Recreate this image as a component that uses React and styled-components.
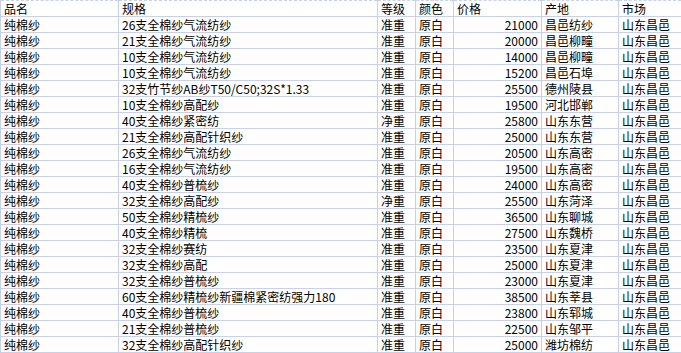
import React from "react"
import styled, { createGlobalStyle } from "styled-components"

const rows = [
    ["纯棉纱", "26支全棉纱气流纺纱", "准重", "原白", "21000", "昌邑纺纱", "山东昌邑"],
    ["纯棉纱", "21支全棉纱气流纺纱", "准重", "原白", "20000", "昌邑柳疃", "山东昌邑"],
    ["纯棉纱", "10支全棉纱气流纺纱", "准重", "原白", "14000", "昌邑柳疃", "山东昌邑"],
    ["纯棉纱", "10支全棉纱气流纺纱", "准重", "原白", "15200", "昌邑石埠", "山东昌邑"],
    ["纯棉纱", "32支竹节纱AB纱T50/C50;32S*1.33", "准重", "原白", "25500", "德州陵县", "山东昌邑"],
    ["纯棉纱", "10支全棉纱高配纱", "准重", "原白", "19500", "河北邯郸", "山东昌邑"],
    ["纯棉纱", "40支全棉纱紧密纺", "净重", "原白", "25800", "山东东营", "山东昌邑"],
    ["纯棉纱", "21支全棉纱高配针织纱", "准重", "原白", "25000", "山东东营", "山东昌邑"],
    ["纯棉纱", "26支全棉纱气流纺纱", "准重", "原白", "20500", "山东高密", "山东昌邑"],
    ["纯棉纱", "16支全棉纱气流纺纱", "准重", "原白", "19500", "山东高密", "山东昌邑"],
    ["纯棉纱", "40支全棉纱普梳纱", "准重", "原白", "24000", "山东高密", "山东昌邑"],
    ["纯棉纱", "32支全棉纱高配纱", "净重", "原白", "25500", "山东菏泽", "山东昌邑"],
    ["纯棉纱", "50支全棉纱精梳纱", "准重", "原白", "36500", "山东聊城", "山东昌邑"],
    ["纯棉纱", "40支全棉纱精梳", "准重", "原白", "27500", "山东魏桥", "山东昌邑"],
    ["纯棉纱", "32支全棉纱赛纺", "准重", "原白", "23500", "山东夏津", "山东昌邑"],
    ["纯棉纱", "32支全棉纱高配", "准重", "原白", "25000", "山东夏津", "山东昌邑"],
    ["纯棉纱", "32支全棉纱普梳纱", "准重", "原白", "23000", "山东夏津", "山东昌邑"],
    ["纯棉纱", "60支全棉纱精梳纱新疆棉紧密纺强力180", "准重", "原白", "38500", "山东莘县", "山东昌邑"],
    ["纯棉纱", "40支全棉纱普梳纱", "准重", "原白", "23800", "山东郓城", "山东昌邑"],
    ["纯棉纱", "21支全棉纱普梳纱", "准重", "原白", "22500", "山东邹平", "山东昌邑"],
    ["纯棉纱", "32支全棉纱高配针织纱", "准重", "原白", "25000", "潍坊棉纺", "山东昌邑"],
]

const headers = ["品名", "规格", "等级", "颜色", "价格", "产地", "市场"]
const widths = [118, 259, 38, 38, 88, 77, 63]

function App() {
    return (
        <>
            <GlobalStyle />
            <PriceTable>
                <colgroup>
                    {widths.map((w, i) => <col key={i} style={{ width: w }} />)}
                </colgroup>
                <thead>
                    <tr>
                        {headers.map(h => <HeadCell key={h}>{h}</HeadCell>)}
                    </tr>
                </thead>
                <tbody>
                    {rows.map((r, i) => (
                        <tr key={i}>
                            {r.map((c, j) => (
                                <Cell key={j} $num={j === 4}>{c}</Cell>
                            ))}
                        </tr>
                    ))}
                </tbody>
            </PriceTable>
        </>
    )
}
export default App

const GlobalStyle = createGlobalStyle`
body {
    margin: 0;
    background: #ffffff;
}
`

const PriceTable = styled.table`
width: 681px;
table-layout: fixed;
border-collapse: collapse;
font-family: "Noto Sans CJK SC", "DejaVu Sans", sans-serif;
font-size: 12px;
color: #000000;
border-top: 1px dashed #c8d0ec;
`

const HeadCell = styled.th`
height: 15px;
padding: 0 0 0 3px;
line-height: 15px;
font-weight: normal;
text-align: left;
border: 1px solid #c8d0ec;
border-top: none;
white-space: nowrap;
overflow: hidden;
`

const Cell = styled.td`
height: 15px;
padding: ${p => p.$num ? "0 3px 0 0" : "0 0 0 3px"};
line-height: 15px;
text-align: ${p => p.$num ? "right" : "left"};
border: 1px solid #c8d0ec;
white-space: nowrap;
overflow: hidden;
`
